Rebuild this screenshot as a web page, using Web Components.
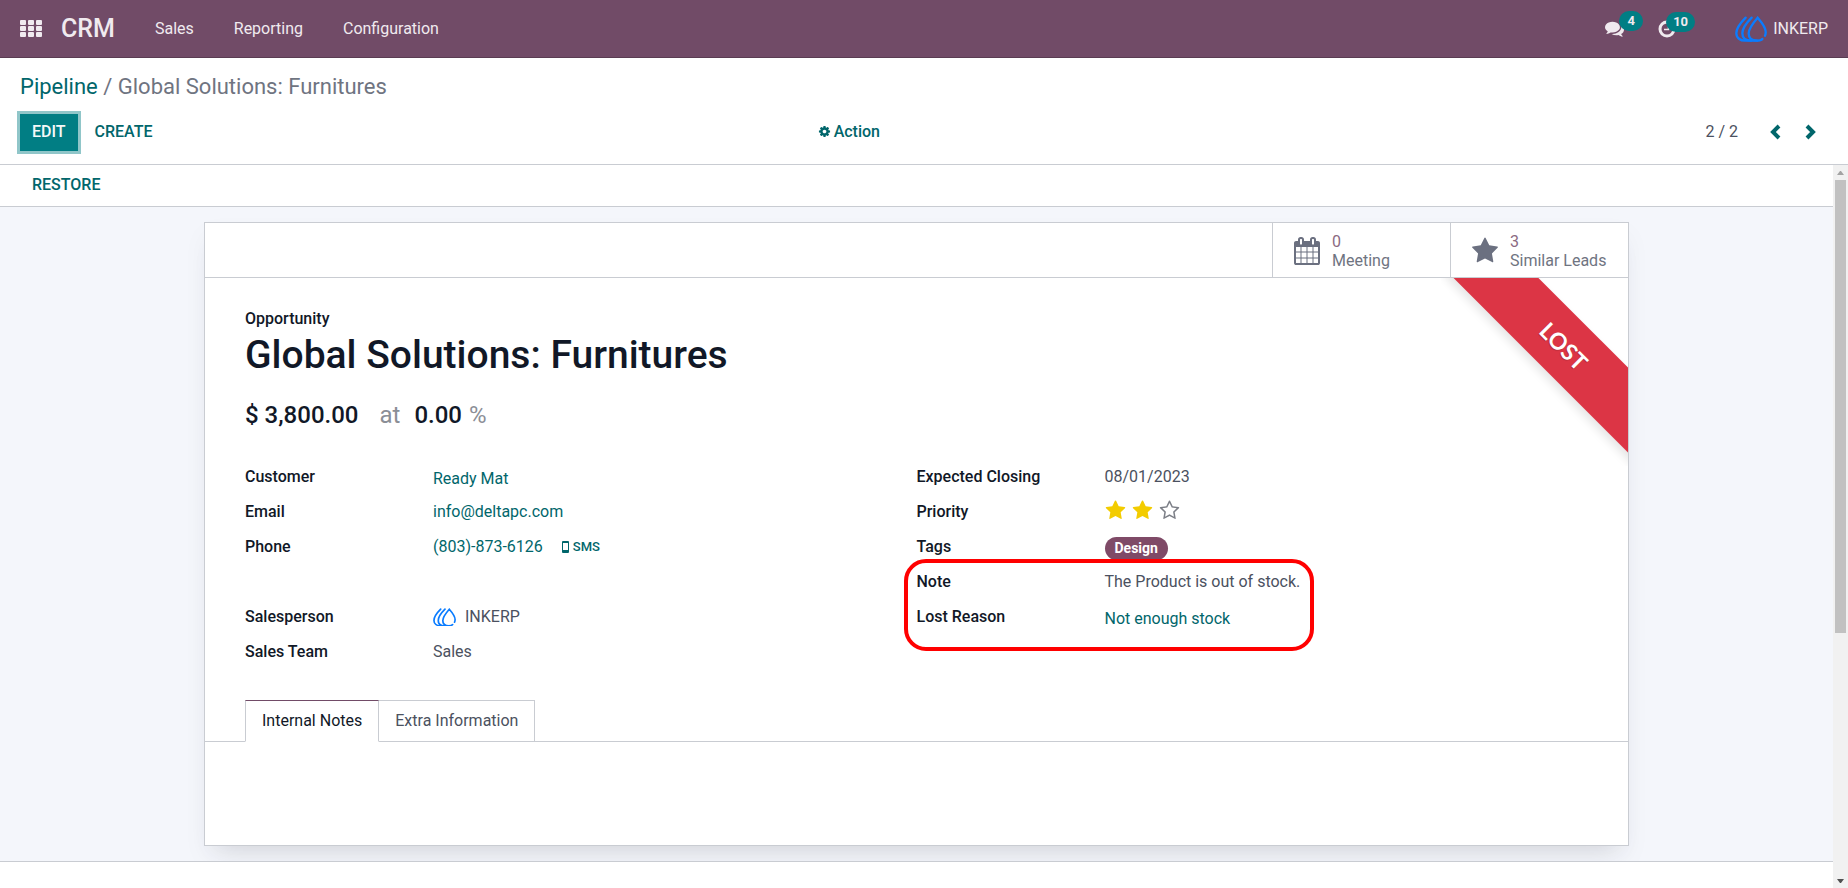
<!DOCTYPE html>
<html lang="en">
<head>
<meta charset="utf-8">
<title>CRM - Global Solutions: Furnitures</title>
<style>
  html, body { margin: 0; height: 100%; }
  body {
    --teal: #01666b;
    --primary: #017e84;
    --line: #c9ccd2;
    --ink: #111827;
    --text: #4b5160;
    --muted: #6f7481;
    --brand: #714b67;
    font: 400 16px/24px Roboto, sans-serif;
    color: var(--text);
    background: #fff;
    overflow: hidden;
  }
</style>
</head>
<body>
<crm-app></crm-app>

<template id="t-app">
  <style>
    :host { display: flex; flex-direction: column; height: 100vh; }
    .view { flex: 1; min-height: 0; display: flex; }
    .content { flex: 1; min-width: 0; overflow: hidden; }
    .bg { background: #f4f6fb; padding: 15px; border-bottom: 1px solid var(--line); overflow: hidden; }
  </style>
  <crm-navbar></crm-navbar>
  <control-panel></control-panel>
  <div class="view">
    <main class="content">
      <status-bar>Restore</status-bar>
      <div class="bg"><form-sheet></form-sheet></div>
    </main>
    <scroll-rail></scroll-rail>
  </div>
</template>

<template id="t-navbar">
  <style>
    :host { display: flex; align-items: center; justify-content: space-between; height: 57px; padding: 0 20px;
      background: #714b67; border-bottom: 1px solid #5a3c52; color: #f0eaef; }
    nav, .tray, .user { display: flex; align-items: center; }
    a, button { color: inherit; text-decoration: none; background: none; border: 0; padding: 0; font: inherit; }
    svg { display: block; }
    .brand { font-size: 25px; font-weight: 500; line-height: 32px; margin-left: 19px; }
    nav { gap: 40px; }
    .start { display: flex; align-items: center; }
    .tray { gap: 34px; }
    .tray button { position: relative; }
    .badge { position: absolute; left: 14px; top: -8px; min-width: 8px; padding: 0 8px; height: 20px; border-radius: 10px;
      background: var(--primary); color: #f0eaef; font-size: 13px; font-weight: 700; line-height: 20px; text-align: center; }
    .late { left: 8px; padding: 0 7px; }
    .user { gap: 6px; margin-left: 25px; }
  </style>
  <nav aria-label="Main">
    <div class="start">
      <button aria-label="Apps"><svg width="22" height="18" viewBox="0 0 22 18" fill="currentColor">
        <rect width="6" height="5" rx="1"/><rect x="8" width="6" height="5" rx="1"/><rect x="16" width="6" height="5" rx="1"/>
        <rect y="6" width="6" height="5" rx="1"/><rect x="8" y="6" width="6" height="5" rx="1"/><rect x="16" y="6" width="6" height="5" rx="1"/>
        <rect y="12" width="6" height="5" rx="1"/><rect x="8" y="12" width="6" height="5" rx="1"/><rect x="16" y="12" width="6" height="5" rx="1"/>
      </svg></button>
      <a class="brand" href="#">CRM</a>
    </div>
    <a href="#">Sales</a><a href="#">Reporting</a><a href="#">Configuration</a>
  </nav>
  <div class="tray">
    <button aria-label="Messages"><fa-icon name="comments" style="--size:19px"></fa-icon><span class="badge">4</span></button>
    <button aria-label="Activities"><svg width="18" height="18" viewBox="0 0 18 18" fill="none" stroke="currentColor">
      <circle cx="9" cy="9" r="7" stroke-width="3"/><path d="M6 9.500h4.500V5" stroke-width="1.500"/></svg><span class="badge late">10</span></button>
    <a class="user" href="#"><ink-logo style="--w:32px"></ink-logo>INKERP</a>
  </div>
</template>

<template id="t-logo">
  <style>:host { display: block; width: var(--w); } svg { display: block; width: 100%; }</style>
  <svg viewBox="0 0 96 78" fill="none" stroke="#0a7cff" stroke-width="7" stroke-linecap="round" aria-hidden="true">
    <path d="M82 69Q78 74 66 74C50 74 41 66 41 52C41 38 54 21 68 5C82 21 94 36 92 50Q92 55 90 59"/>
    <path d="M50 5C34 21 22 38 22 52C22 66 32 74 48 74"/>
    <path d="M32 5C16 21 4 38 4 52C4 66 16 74 30 74H66"/>
  </svg>
</template>

<template id="t-icon">
  <style>:host { display: block; width: var(--size, 16px); height: var(--size, 16px); } svg { display: block; width: 100%; height: 100%; }</style>
  <svg viewBox="0 0 1792 1792" fill="currentColor" aria-hidden="true"><path/></svg>
</template>

<template id="t-control">
  <style>
    :host { display: block; padding: 12px 20px 13px; border-bottom: 1px solid var(--line); }
    .crumbs { font-size: 22px; line-height: 33px; color: var(--muted); }
    a { color: var(--teal); text-decoration: none; }
    .row { display: grid; grid-template-columns: 1fr 1fr; align-items: center; margin-top: 11px; }
    .left, .right, .buttons, .action { display: flex; align-items: center; }
    .left { justify-content: space-between; }
    .right { justify-content: flex-end; }
    .buttons { gap: 5px; }
    button { height: 37px; border: 0; padding: 0 12px 2px; background: none; color: var(--teal); font: 500 16px/24px Roboto, sans-serif; }
    .caps { text-transform: uppercase; }
    .edit { background: var(--primary); color: #f4f9f9; box-shadow: 0 0 0 3px #90c6c9; }
    .action { gap: 3px; margin-right: 32px; }
    .pager { margin-right: 20px; padding-bottom: 2px; }
    .step { padding: 0 12px 2px; }
    svg { display: block; }
  </style>
  <div class="crumbs"><a href="#">Pipeline</a> / Global Solutions: Furnitures</div>
  <div class="row">
    <div class="left">
      <div class="buttons"><button class="edit caps">Edit</button><button class="caps">Create</button></div>
      <button class="action"><fa-icon name="cog" style="--size:13px"></fa-icon>Action</button>
    </div>
    <div class="right">
      <span class="pager">2 / 2</span>
      <button class="step" aria-label="Previous"><svg width="11" height="16" viewBox="0 0 11 16" fill="none" stroke="currentColor" stroke-width="4"><path d="M9 2L3 8l6 6"/></svg></button>
      <button class="step" aria-label="Next"><svg width="11" height="16" viewBox="0 0 11 16" fill="none" stroke="currentColor" stroke-width="4"><path d="M2 2l6 6-6 6"/></svg></button>
    </div>
  </div>
</template>

<template id="t-status">
  <style>
    :host { display: flex; align-items: center; height: 41px; padding: 0 20px; border-bottom: 1px solid var(--line); }
    button { border: 0; background: none; padding: 0 12px 2px; height: 37px; color: var(--teal); font: 500 16px/24px Roboto, sans-serif; text-transform: uppercase; }
  </style>
  <button><slot></slot></button>
</template>

<template id="t-rail">
  <style>
    :host { display: flex; flex-direction: column; align-items: center; width: 15px; background: #f1f1f1; }
    .cap { height: 15px; display: flex; align-items: center; }
    .track { flex: 1; width: 11px; }
    .thumb { height: 65.4%; background: #c1c1c1; }
    svg { display: block; }
  </style>
  <div class="cap"><svg width="7" height="4"><path d="M0 4h7L4 0H3z" fill="#a3a3a3"/></svg></div>
  <div class="track"><div class="thumb"></div></div>
  <div class="cap"><svg width="7" height="4"><path d="M0 0h7L4 4H3z" fill="#505050"/></svg></div>
</template>

<template id="t-stat">
  <style>
    :host { display: block; width: 178px; box-sizing: border-box; border-left: 1px solid var(--line); }
    button { width: 100%; height: 54px; display: flex; align-items: center; gap: 11px; border: 0; background: none;
      padding: 1px 0 0 20px; font: 400 16px/19px Roboto, sans-serif; color: var(--muted); text-align: left; }
    fa-icon { --size: 28px; color: #6b7080; }
    .n { display: block; color: #8b6a82; }
  </style>
  <button><fa-icon></fa-icon><span><span class="n"></span><slot></slot></span></button>
</template>

<template id="t-ribbon">
  <style>
    :host { position: absolute; top: 0; right: 0; width: 187px; height: 188px; overflow: hidden; }
    span { position: absolute; left: -12px; top: 38px; width: 270px; height: 60px; transform: rotate(45deg);
      background: #dc3545; box-shadow: 0 5px 10px rgba(0,0,0,.1); color: #fff; text-align: center;
      font: 700 23px/60px Lato, sans-serif; text-transform: uppercase; text-shadow: 0 1px 1px rgba(0,0,0,.2); }
  </style>
  <span><slot></slot></span>
</template>

<template id="t-field">
  <style>
    :host { display: grid; grid-template-columns: 188px 1fr; height: 35px; }
    .label { color: var(--ink); font-weight: 500; }
    .value { display: flex; align-items: center; height: 24px; }
    :host([relation]) .value { padding-top: 2px; }
  </style>
  <span class="label"></span><div class="value"><slot></slot></div>
</template>

<template id="t-priority">
  <style>
    :host { display: flex; gap: 6px; padding-bottom: 4px; }
    button { border: 0; padding: 0; background: none; color: #f3cc00; --size: 21px; }
    .off { color: #7c7f87; }
  </style>
  <button aria-label="Medium"><fa-icon name="star"></fa-icon></button>
  <button aria-label="High"><fa-icon name="star"></fa-icon></button>
  <button class="off" aria-label="Very High"><fa-icon name="staro"></fa-icon></button>
</template>

<template id="t-tabs">
  <style>
    :host { display: block; }
    .bar { display: flex; padding: 0 40px; border-bottom: 1px solid var(--line); }
    button { height: 42px; margin: 0 0 -1px -1px; padding: 0 16px; border: 1px solid var(--line); background: #fff;
      font: 400 16px/24px Roboto, sans-serif; color: var(--text); }
    button:first-child { margin-left: 0; position: relative; border-top-color: var(--brand); border-bottom-color: #fff; color: var(--ink); }
    .page { min-height: 103px; }
  </style>
  <div class="bar" role="tablist">
    <button role="tab" aria-selected="true">Internal Notes</button><button role="tab" aria-selected="false">Extra Information</button>
  </div>
  <div class="page" role="tabpanel"></div>
</template>

<template id="t-sheet">
  <style>
    :host { display: block; box-sizing: border-box; max-width: 1425px; margin: 0 auto; border: 1px solid var(--line); background: #fff;
      box-shadow: 0 16px 24px -14px rgba(0,0,0,.12), 0 12px 24px rgba(40,44,80,.04); }
    .stats { display: flex; justify-content: flex-end; border-bottom: 1px solid var(--line); }
    .body { position: relative; }
    .title { padding: 29px 40px 0; color: var(--ink); }
    .kind { display: block; font-size: 16px; font-weight: 500; }
    h1 { margin: 0; font-size: 39px; font-weight: 500; line-height: 48px; }
    .money { display: flex; font-size: 24px; font-weight: 500; line-height: 32px; margin-top: 20px; }
    .money span { color: #8b8e96; font-weight: 400; }
    .at { margin: 0 14px 0 21px; }
    .pct { margin-left: 7px; }
    .groups { display: grid; grid-template-columns: 1fr 1fr; padding: 34px 40px 25px; }
    a { color: var(--teal); text-decoration: none; }
    .sms { display: flex; align-items: center; gap: 4px; margin-left: 19px; font-size: 13px; font-weight: 500; }
    .person { margin-left: 9px; }
    .tag { background: #7f4a67; color: #fff; font-size: 14px; font-weight: 700; line-height: 23px; height: 23px; border-radius: 12px; padding: 0 10px; margin-top: 2px; }
    .right { position: relative; }
    .mark { position: absolute; left: -13px; top: 94px; width: 402px; height: 84px; border: 4px solid #f00; border-radius: 22px; pointer-events: none; }
  </style>
  <div class="stats">
    <stat-button icon="calendar" count="0">Meeting</stat-button>
    <stat-button icon="star" count="3">Similar Leads</stat-button>
  </div>
  <div class="body">
    <corner-ribbon>Lost</corner-ribbon>
    <div class="title">
      <span class="kind">Opportunity</span>
      <h1>Global Solutions: Furnitures</h1>
      <div class="money">$ 3,800.00<span class="at">at</span>0.00<span class="pct">%</span></div>
    </div>
    <div class="groups">
      <div>
        <form-field label="Customer" relation><a href="#">Ready Mat</a></form-field>
        <form-field label="Email"><a href="#">info@deltapc.com</a></form-field>
        <form-field label="Phone"><a href="#">(803)-873-6126</a><a class="sms" href="#"><svg width="7" height="12" viewBox="0 0 7 12" aria-hidden="true"><path fill="currentColor" fill-rule="evenodd" d="M1 0h5a1 1 0 0 1 1 1v10a1 1 0 0 1-1 1H1a1 1 0 0 1-1-1V1a1 1 0 0 1 1-1zM1 2v7h5V2z"/></svg>SMS</a></form-field>
        <form-field></form-field>
        <form-field label="Salesperson"><ink-logo style="--w:23px"></ink-logo><span class="person">INKERP</span></form-field>
        <form-field label="Sales Team">Sales</form-field>
      </div>
      <div class="right">
        <form-field label="Expected Closing">08/01/2023</form-field>
        <form-field label="Priority"><priority-stars></priority-stars></form-field>
        <form-field label="Tags"><span class="tag">Design</span></form-field>
        <form-field label="Note">The Product is out of stock.</form-field>
        <form-field label="Lost Reason" relation><a href="#">Not enough stock</a></form-field>
        <div class="mark"></div>
      </div>
    </div>
    <note-tabs></note-tabs>
  </div>
</template>

<script>
  const ICONS = {
    star: "M1728 647q0 22-26 48l-363 354 86 500q1 7 1 20 0 21-10.5 35.5t-30.5 14.5q-19 0-40-12l-449-236-449 236q-22 12-40 12-21 0-31.5-14.5t-10.5-35.5q0-6 2-20l86-500-364-354q-25-27-25-48 0-37 56-46l502-73 225-455q19-41 49-41t49 41l225 455 502 73q56 9 56 46z",
    staro: "M1201 1004l306-297-422-62-189-382-189 382-422 62 306 297-73 421 378-199 377 199zm527-357q0 22-26 48l-363 354 86 500q1 7 1 20 0 50-41 50-19 0-40-12l-449-236-449 236q-22 12-40 12-21 0-31.5-14.5t-10.5-35.5q0-6 2-20l86-500-364-354q-25-27-25-48 0-37 56-46l502-73 225-455q19-41 49-41t49 41l225 455 502 73q56 9 56 46z",
    calendar: "M192 1664h288v-288h-288v288zm352 0h320v-288h-320v288zm-352-352h288v-320h-288v320zm352 0h320v-320h-320v320zm-352-384h288v-288h-288v288zm736 736h320v-288h-320v288zm-384-736h320v-288h-320v288zm768 736h288v-288h-288v288zm-384-352h320v-320h-320v320zm-352-864v-288q0-13-9.500-22.500t-22.500-9.500h-64q-13 0-22.500 9.500t-9.500 22.500v288q0 13 9.500 22.500t22.500 9.500h64q13 0 22.500-9.500t9.500-22.500zm736 864h288v-320h-288v320zm-384-384h320v-288h-320v288zm384 0h288v-288h-288v288zm32-480v-288q0-13-9.500-22.500t-22.500-9.500h-64q-13 0-22.500 9.500t-9.500 22.500v288q0 13 9.500 22.500t22.500 9.500h64q13 0 22.500-9.500t9.500-22.500zm384-64v1280q0 52-38 90t-90 38h-1408q-52 0-90-38t-38-90v-1280q0-52 38-90t90-38h128v-96q0-66 47-113t113-47h64q66 0 113 47t47 113v96h384v-96q0-66 47-113t113-47h64q66 0 113 47t47 113v96h128q52 0 90 38t38 90z",
    cog: "M1152 896q0-106-75-181t-181-75-181 75-75 181 75 181 181 75 181-75 75-181zm512-109v222q0 12-8 23t-20 13l-185 28q-19 54-39 91 35 50 107 138 10 12 10 25t-9 23q-27 37-99 108t-94 71q-12 0-26-9l-138-108q-44 23-91 38-16 136-29 186-7 28-36 28h-222q-14 0-24.500-8.500t-11.500-21.500l-28-184q-49-16-90-37l-141 107q-10 9-25 9-14 0-25-11-126-114-165-168-7-10-7-23 0-12 8-23 15-21 51-66.500t54-70.500q-27-50-41-99l-183-27q-13-2-21-12.500t-8-23.500v-222q0-12 8-23t19-13l186-28q14-46 39-92-40-57-107-138-10-12-10-24 0-10 9-23 26-36 98.500-107.500t94.500-71.500q13 0 26 10l138 107q44-23 91-38 16-136 29-186 7-28 36-28h222q14 0 24.500 8.500t11.500 21.500l28 184q49 16 90 37l142-107q9-9 24-9 13 0 25 10 129 119 165 170 7 8 7 22 0 12-8 23-15 21-51 66.500t-54 70.500q26 50 41 98l183 28q13 2 21 12.500t8 23.500z",
    comments: "M1408 768q0 139-94 257t-256.500 186.500-353.500 68.500q-86 0-176-16-124 88-278 128-36 9-86 16h-3q-11 0-20.500-8t-11.500-21q-1-3-1-6.500t.5-6.500 2-6l2.500-5t3.500-5.500 4-5 4.500-5 4-4.500q5-6 23-25t26-29.500 22.500-29 25-38.500 20.500-44q-124-72-195-177t-71-224q0-139 94-257t256.500-186.500 353.500-68.500 353.500 68.500 256.500 186.500 94 257zm384 256q0 120-71 224.500t-195 176.500q10 24 20.500 44t25 38.500 22.500 29 26 29.500 23 25q1 1 4 4.500t4.500 5 4 5 3.500 5.500l2.500 5t2 6 .5 6.500-1 6.500q-3 14-13 22t-22 7q-50-7-86-16-154-40-278-128-90 16-176 16-271 0-472-132 58 4 88 4 161 0 309-45t264-129q125-92 192-212t67-254q0-77-23-152 129 71 204 178t75 230z"
  };

  const define = (name, template, setup) => customElements.define(name, class extends HTMLElement {
    constructor() {
      super();
      this.attachShadow({ mode: "open" }).append(document.getElementById(template).content.cloneNode(true));
    }
    connectedCallback() { if (setup) setup(this, this.shadowRoot); }
  });

  define("fa-icon", "t-icon", (el, root) => root.querySelector("path").setAttribute("d", ICONS[el.getAttribute("name")] || ""));
  define("ink-logo", "t-logo");
  define("stat-button", "t-stat", (el, root) => {
    const icon = document.createElement("fa-icon");
    icon.setAttribute("name", el.getAttribute("icon"));
    root.querySelector("fa-icon").replaceWith(icon);
    root.querySelector(".n").textContent = el.getAttribute("count");
  });
  define("corner-ribbon", "t-ribbon");
  define("form-field", "t-field", (el, root) => { root.querySelector(".label").textContent = el.getAttribute("label") || ""; });
  define("priority-stars", "t-priority");
  define("note-tabs", "t-tabs");
  define("form-sheet", "t-sheet");
  define("status-bar", "t-status");
  define("scroll-rail", "t-rail");
  define("control-panel", "t-control");
  define("crm-navbar", "t-navbar");
  define("crm-app", "t-app");
</script>
</body>
</html>
